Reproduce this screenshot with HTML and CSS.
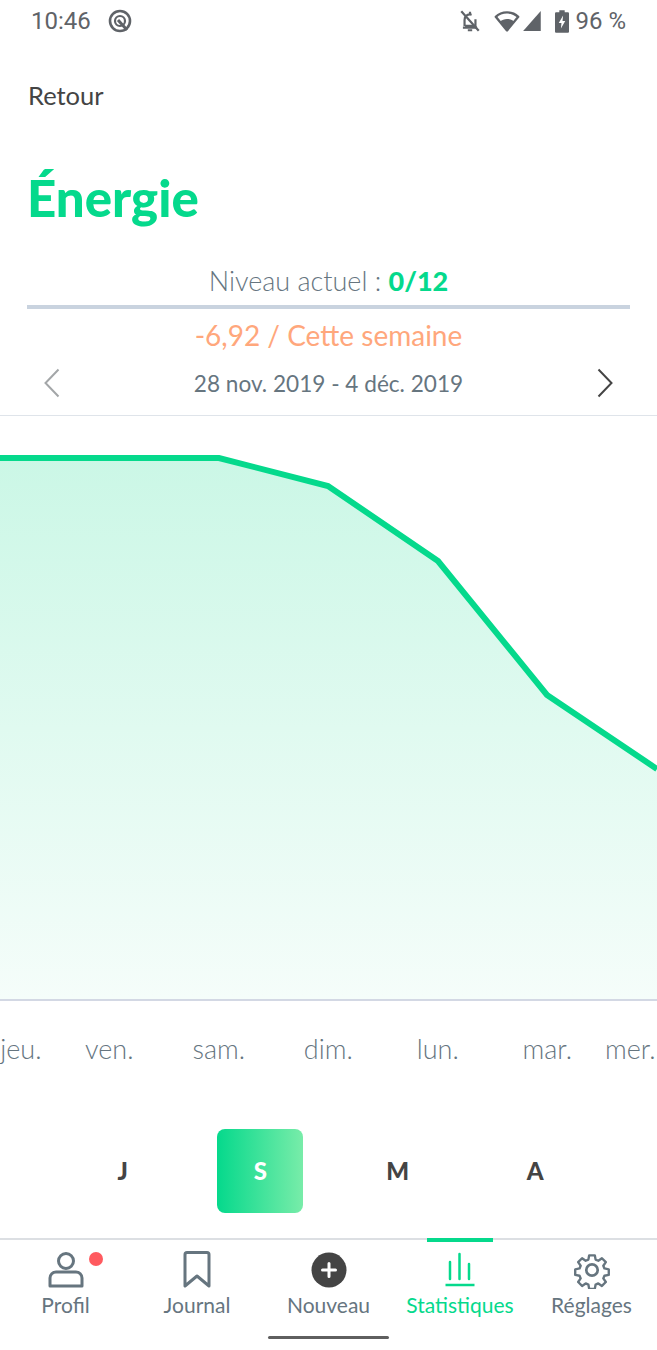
FILE: index.html
```html
<!DOCTYPE html>
<html lang="fr">
<head>
    <meta charset="UTF-8">
    <meta name="viewport" content="width=device-width, initial-scale=1.0">
    <title>Énergie</title>
    <link rel="stylesheet" href="styles.css">
</head>
<body>
    <div class="app">
        <div class="status-bar">
            <div class="status-left">
                <span>10:46</span>
                <svg width="24" height="24" viewBox="0 0 24 24" fill="none" stroke="#5f6368">
                    <circle cx="12" cy="12" r="10" stroke-width="2.600"/>
                    <circle cx="12" cy="12" r="5" stroke-width="2.200"/>
                    <path d="M10 11l9 10" stroke-width="3"/>
                </svg>
            </div>
            <div class="status-right">
                <svg class="status-bell" width="22" height="24" viewBox="0 0 20 22" fill="none">
                    <path d="M10 2.500v1.600M5 15.500V10a5 5 0 0 1 6.500-4.800M15 9.500v6H5.500M3.500 17h13M8 19.500h4" stroke="#5f6368" stroke-width="2"/>
                    <path d="M2 2l16 18" stroke="#5f6368" stroke-width="2"/>
                </svg>
                <svg class="status-wifi" width="26" height="24" viewBox="0 0 22 20" fill="none">
                    <path d="M11 18L1.500 6.500C6.500 1.500 15.500 1.500 20.500 6.500z" stroke="#5f6368" stroke-width="2" stroke-linejoin="round"/>
                    <path d="M11 18L5 10.500C8.500 7.500 13.500 7.500 17 10.500z" fill="#5f6368"/>
                </svg>
                <svg class="status-signal" width="21" height="22" viewBox="0 0 17 20"><path d="M16 1v18H0z" fill="#5f6368"/></svg>
                <svg class="status-battery" width="14" height="23" viewBox="0 0 13 21">
                    <path d="M4 0h5v2h3a1 1 0 0 1 1 1v17a1 1 0 0 1-1 1H1a1 1 0 0 1-1-1V3a1 1 0 0 1 1-1h3z" fill="#5f6368"/>
                    <path d="M7.500 5L3.500 12h2.500l-.5 5 4-7H7z" fill="#fff"/>
                </svg>
                <span>96 %</span>
            </div>
        </div>

        <div class="back-link">Retour</div>
        <h1 class="title">Énergie</h1>

        <div class="level">Niveau actuel : <b>0/12</b></div>
        <div class="level-bar"></div>
        <div class="week-score">-6,92 / Cette semaine</div>

        <div class="date-nav">
            <svg width="18" height="30" viewBox="0 0 18 30" fill="none" stroke="#a3a6a8" stroke-width="2"><path d="M15.500 1.500L2.500 15l13 13.500"/></svg>
            <span>28 nov. 2019 - 4 déc. 2019</span>
            <svg width="18" height="30" viewBox="0 0 18 30" fill="none" stroke="#444" stroke-width="2"><path d="M2.500 1.500L15.500 15l-13 13.500"/></svg>
        </div>

        <svg class="chart" width="657" height="583" viewBox="0 416 657 583">
            <defs>
                <linearGradient id="area" x1="0" y1="0" x2="0" y2="1">
                    <stop offset="0" stop-color="#cbf7e6"/>
                    <stop offset="1" stop-color="#f5fdfa"/>
                </linearGradient>
            </defs>
            <path d="M0 458H219L328 486L438 561L547 695L657 769V999H0Z" fill="url(#area)"/>
            <path d="M0 458H219L328 486L438 561L547 695L657 769" fill="none" stroke="#05d98c" stroke-width="6"/>
        </svg>

        <div class="days">
            <span class="day day-jeu">jeu.</span>
            <span class="day">ven.</span>
            <span class="day">sam.</span>
            <span class="day">dim.</span>
            <span class="day">lun.</span>
            <span class="day">mar.</span>
            <span class="day day-mer">mer.</span>
        </div>

        <div class="periods">
            <div class="period">J</div>
            <div class="period active">S</div>
            <div class="period">M</div>
            <div class="period">A</div>
        </div>

        <div class="tabs">
            <div class="tab">
                <span class="dot"></span>
                <svg width="36" height="38" viewBox="0 0 36 38" fill="none" stroke="#66757f" stroke-width="3" stroke-linejoin="round">
                    <circle cx="18" cy="10" r="7.500"/>
                    <path d="M2 35V27a6 6 0 0 1 6-6h20a6 6 0 0 1 6 6v8z"/>
                </svg>
                <span>Profil</span>
            </div>
            <div class="tab">
                <svg width="36" height="38" viewBox="0 0 36 38" fill="none" stroke="#66757f" stroke-width="3" stroke-linejoin="round">
                    <path d="M6 3.500a2 2 0 0 1 2-2h20a2 2 0 0 1 2 2V35L18 25 6 35z"/>
                </svg>
                <span>Journal</span>
            </div>
            <div class="tab">
                <svg width="36" height="38" viewBox="0 0 36 38">
                    <circle cx="18" cy="19" r="17.500" fill="#444"/>
                    <path d="M18 12.500v13M11.500 19h13" stroke="#fff" stroke-width="3" stroke-linecap="round"/>
                </svg>
                <span>Nouveau</span>
            </div>
            <div class="tab active">
                <svg width="36" height="38" viewBox="0 0 36 38" fill="none" stroke="#05d98c" stroke-width="2.500" stroke-linecap="round">
                    <path d="M17.500 3v25M8 11v17M27 13v15"/>
                    <path d="M3.500 34h29" stroke-linecap="butt"/>
                </svg>
                <span>Statistiques</span>
            </div>
            <div class="tab">
                <svg width="38" height="38" viewBox="0 0 24 24" fill="none" stroke="#66757f" stroke-width="1.700" stroke-linejoin="round">
                    <circle cx="12" cy="12" r="3.600"/>
                    <path d="M10 1.500h4l.6 3.100 1.900.8 2.600-1.800 2.800 2.800-1.800 2.600.8 1.900 3.100.6v4l-3.100.6-.8 1.900 1.800 2.600-2.800 2.800-2.600-1.800-1.900.8-.6 3.100h-4l-.6-3.100-1.900-.8-2.600 1.800-2.800-2.800 1.800-2.600-.8-1.900-3.100-.6v-4l3.100-.6.8-1.900-1.800-2.600 2.800-2.800 2.600 1.800 1.900-.8z" transform="translate(1.400 1.400) scale(.883)"/>
                </svg>
                <span>Réglages</span>
            </div>
        </div>
        <div class="home-bar"></div>
    </div>
</body>
</html>
```

FILE: styles.css
```css
body {
    font-family: Lato, "Open Sans", sans-serif;
    margin: 0;
    padding: 0;
    background-color: white;
}
.app {
    width: 657px;
    height: 1350px;
    overflow: hidden;
    display: flex;
    flex-direction: column;
}
.status-bar {
    height: 42px;
    padding: 0 31px;
    display: flex;
    justify-content: space-between;
    align-items: center;
    font-family: Roboto, sans-serif;
    font-size: 24px;
    color: #5f6368;
}
.status-left {
    display: flex;
    align-items: center;
    gap: 17px;
}
.status-right {
    display: flex;
    align-items: center;
}
.status-wifi {
    margin-left: 13px;
}
.status-signal {
    margin-left: 2px;
}
.status-battery {
    margin: 0 6px 0 12px;
}
.back-link {
    margin: 38px 0 0 28px;
    font-size: 25.500px;
    line-height: 30px;
    color: #444;
}
.title {
    margin: 59px 0 0 27px;
    font-size: 51px;
    line-height: 58px;
    font-weight: 900;
    color: #05d98c;
}
.level {
    margin-top: 39px;
    text-align: center;
    font-size: 27px;
    line-height: 30px;
    font-weight: 300;
    color: #66757f;
}
.level b {
    color: #05d98c;
    font-weight: 900;
}
.level-bar {
    height: 4px;
    margin: 9px 27px 0;
    background-color: #c9d3df;
}
.week-score {
    margin-top: 11px;
    text-align: center;
    font-size: 28px;
    line-height: 30px;
    color: #ffa77c;
}
.date-nav {
    height: 48px;
    margin-top: 9px;
    padding: 0 43px 8px 43px;
    display: flex;
    justify-content: space-between;
    align-items: center;
    font-size: 22.600px;
    color: #66757f;
    border-bottom: 1px solid #dfe4ea;
}
.chart {
    display: block;
    flex: none;
}
.days {
    height: 97px;
    width: 767px;
    margin-left: -55px;
    box-sizing: border-box;
    border-top: 2px solid #d3d8e4;
    display: grid;
    grid-template-columns: repeat(7, 109.500px);
    align-items: center;
    font-size: 27px;
    font-weight: 300;
    color: #66757f;
    text-align: center;
}
.day-jeu {
    text-align: right;
    padding-right: 13px;
}
.day-mer {
    text-align: left;
    padding-left: 3px;
}
.periods {
    height: 84px;
    margin-top: 33px;
    padding-left: 54px;
    display: grid;
    grid-template-columns: repeat(4, 137.500px);
    align-items: center;
    justify-items: center;
    font-size: 24px;
    font-weight: 900;
    color: #444;
}
.period {
    width: 86px;
    line-height: 84px;
    text-align: center;
    border-radius: 8px;
}
.period.active {
    color: white;
    background: linear-gradient(90deg, #05d98c, #78eca9);
}
.tabs {
    margin-top: 25px;
    height: 91px;
    border-top: 2px solid #dcdfe3;
    display: grid;
    grid-template-columns: 131px 132px 131px 132px 131px;
}
.tab {
    position: relative;
    display: flex;
    flex-direction: column;
    align-items: center;
    padding-top: 11px;
    font-size: 21px;
    line-height: 26px;
    color: #66757f;
}
.tab svg {
    margin-bottom: 3px;
}
.tab.active {
    color: #05d98c;
}
.tab.active::before {
    content: "";
    position: absolute;
    top: -2px;
    left: 33px;
    width: 66px;
    height: 4px;
    background-color: #05d98c;
}
.dot {
    position: absolute;
    top: 12px;
    left: 89px;
    width: 14px;
    height: 14px;
    border-radius: 50%;
    background-color: #ff5a5f;
}
.home-bar {
    width: 121px;
    height: 3px;
    margin: 5px auto 0;
    border-radius: 2px;
    background-color: #5f5f5f;
}
```
